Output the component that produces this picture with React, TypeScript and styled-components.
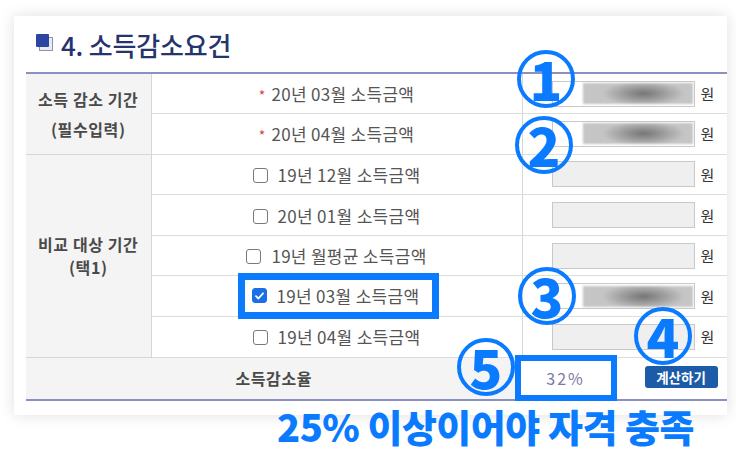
import React from "react";
import styled, { createGlobalStyle } from "styled-components";

const BLUE = "#0a7bff";

const GlobalStyle = createGlobalStyle`
  html, body {
    margin: 0;
    padding: 0;
    background: #fff;
  }
  body {
    font-family: "Noto Sans CJK KR", "Noto Sans", sans-serif;
    color: #555;
  }
`;

const Page = styled.div`
  width: 736px;
  height: 457px;
  padding: 16px 9px 0 14px;
  box-sizing: border-box;
  overflow: hidden;
`;

const Card = styled.div`
  width: 713px;
  height: 399px;
  background: #fff;
  box-shadow: 0 0 14px rgba(0, 0, 0, 0.13);
  padding-left: 12px;
  box-sizing: border-box;
`;

const TitleBar = styled.div`
  height: 56px;
  display: flex;
  align-items: center;
  gap: 8px;
  padding-left: 10px;
`;

const TitleIcon = styled.span`
  position: relative;
  width: 17px;
  height: 17px;
  margin-top: -3px;

  &::after {
    content: "";
    position: absolute;
    left: 3px;
    top: 3px;
    width: 12px;
    height: 12px;
    border: 1px solid #8d93a8;
    background: #e9ebf2;
  }
  &::before {
    content: "";
    position: absolute;
    left: 0;
    top: 0;
    width: 13px;
    height: 13px;
    border-radius: 1px;
    background: #2c45a3;
    z-index: 1;
  }
`;

const Title = styled.h2`
  margin: 0;
  font-size: 26px;
  font-weight: 500;
  color: #26346e;
  letter-spacing: -0.2px;
`;

const TableWrap = styled.div`
  position: relative;
`;

const Table = styled.table`
  width: 701px;
  border-collapse: collapse;
  table-layout: fixed;
  border-top: 2px solid #8a90c2;
  border-bottom: 2px solid #8a90c2;
`;

const Row = styled.tr<{ $h?: number }>`
  height: ${(p) => p.$h ?? 40.6}px;
`;

const HeadCell = styled.th<{ $lh?: number }>`
  background: #f4f4f4;
  border-bottom: 1px solid #d6d6d6;
  border-right: 1px solid #d6d6d6;
  font-size: 16px;
  font-weight: 700;
  color: #4a4a4a;
  letter-spacing: 0.6px;
  line-height: ${(p) => p.$lh ?? 24}px;
  text-align: center;
  padding: 0;
`;

const LabelCell = styled.td`
  border-bottom: 1px solid #dcdcdc;
  border-right: 1px solid #d6d6d6;
  text-align: center;
  padding: 0;
  font-size: 17px;
  letter-spacing: 0.3px;
  color: #555;
  white-space: nowrap;
`;

const ValueCell = styled.td`
  border-bottom: 1px solid #dcdcdc;
  padding: 0 0 0 29px;
`;

const Asterisk = styled.span`
  color: #e23b3b;
  font-size: 14px;
  margin-right: 6px;
`;

const Check = styled.span<{ $on?: boolean }>`
  display: inline-flex;
  align-items: center;
  justify-content: center;
  width: 13px;
  height: 13px;
  border-radius: 3px;
  border: 1px solid ${(p) => (p.$on ? "#1a6fe8" : "#7a7a7a")};
  background: ${(p) => (p.$on ? "#1a6fe8" : "#fff")};
  margin-right: 10px;
  vertical-align: -1px;
`;

const Highlight = styled.span`
  display: inline-flex;
  align-items: center;
  border: 7px solid ${BLUE};
  padding: 0 13px 0 7px;
  height: 32px;
  margin: -8px 0 -6px 4px;
`;

const Field = styled.div`
  display: flex;
  align-items: center;
  gap: 6px;
  font-size: 15px;
  color: #333;
`;

const Input = styled.div<{ $off?: boolean }>`
  width: 143px;
  height: 26px;
  box-sizing: border-box;
  border: 1px solid #c9c9c9;
  background: ${(p) => (p.$off ? "#efefef" : "#fff")};
  display: flex;
  align-items: center;
  justify-content: flex-end;
  padding-right: 1px;
`;

const Blur = styled.div`
  width: 110px;
  height: 21px;
  background: radial-gradient(
    ellipse 50% 80% at 55% 50%,
    #747474 0%,
    #9a9a9a 35%,
    #c5c5c5 75%
  );
  background-color: #c5c5c5;
  filter: blur(1px);
`;

const RateRow = styled.div`
  display: flex;
  align-items: center;
  margin-left: -37px;
`;

const RateBox = styled.div`
  width: 102px;
  height: 46px;
  box-sizing: border-box;
  border: 6px solid ${BLUE};
  background: #fff;
  display: flex;
  align-items: center;
  justify-content: center;
  margin: -3px 0;
  font-size: 16px;
  letter-spacing: 2px;
  color: #7d79a8;
  position: relative;
`;

const CalcButton = styled.button`
  margin-left: 28px;
  width: 73px;
  height: 22px;
  border: none;
  border-radius: 3px;
  background: #1c5ba7;
  color: #fff;
  font-family: inherit;
  font-size: 13.5px;
  font-weight: 700;
  padding: 0;
  line-height: 22px;
  margin-top: -2px;
`;

const Circle = styled.div<{ $x: number; $y: number }>`
  position: absolute;
  left: ${(p) => p.$x}px;
  top: ${(p) => p.$y}px;
  width: 58px;
  height: 58px;
  box-sizing: border-box;
  border: 4px solid ${BLUE};
  border-radius: 50%;
  display: flex;
  align-items: center;
  justify-content: center;
  color: ${BLUE};
  font-family: "Noto Sans CJK KR", "Noto Sans", sans-serif;
  font-weight: 900;
  font-size: 54px;
  line-height: 1;
  padding-bottom: 2px;
  pointer-events: none;
`;

const Caption = styled.div`
  position: relative;
  margin-top: -11px;
  padding-right: 33px;
  text-align: right;
  font-size: 38px;
  font-weight: 900;
  color: ${BLUE};
  letter-spacing: -0.5px;
  line-height: 44px;
`;

type Item = { label: string; checked?: boolean; boxed?: boolean };

const compare: Item[] = [
  { label: "19년 12월 소득금액" },
  { label: "20년 01월 소득금액" },
  { label: "19년 월평균 소득금액" },
  { label: "19년 03월 소득금액", checked: true, boxed: true },
  { label: "19년 04월 소득금액" },
];

const CheckMark = () => (
  <svg width="9" height="8" viewBox="0 0 9 8">
    <path d="M1 4.2 L3.4 6.5 L8 1.3" fill="none" stroke="#fff" strokeWidth="1.8" strokeLinecap="round" strokeLinejoin="round" />
  </svg>
);

const App = () => {
  return (
    <Page>
      <GlobalStyle />
      <Card>
        <TitleBar>
          <TitleIcon />
          <Title>4. 소득감소요건</Title>
        </TitleBar>
        <TableWrap>
          <Table>
            <colgroup>
              <col style={{ width: 125 }} />
              <col style={{ width: 371 }} />
              <col />
            </colgroup>
            <tbody>
              <Row>
                <HeadCell rowSpan={2} $lh={30}>
                  소득 감소 기간
                  <br />
                  (필수입력)
                </HeadCell>
                <LabelCell>
                  <Asterisk>*</Asterisk>20년 03월 소득금액
                </LabelCell>
                <ValueCell>
                  <Field>
                    <Input>
                      <Blur />
                    </Input>
                    원
                  </Field>
                </ValueCell>
              </Row>
              <Row>
                <LabelCell>
                  <Asterisk>*</Asterisk>20년 04월 소득금액
                </LabelCell>
                <ValueCell>
                  <Field>
                    <Input>
                      <Blur />
                    </Input>
                    원
                  </Field>
                </ValueCell>
              </Row>
              {compare.map((item, i) => (
                <Row key={item.label}>
                  {i === 0 && (
                    <HeadCell rowSpan={5} $lh={23}>
                      비교 대상 기간
                      <br />
                      (택1)
                    </HeadCell>
                  )}
                  <LabelCell>
                    {item.boxed ? (
                      <Highlight>
                        <Check $on>
                          <CheckMark />
                        </Check>
                        {item.label}
                      </Highlight>
                    ) : (
                      <>
                        <Check />
                        {item.label}
                      </>
                    )}
                  </LabelCell>
                  <ValueCell>
                    <Field>
                      <Input $off={!item.checked}>{item.checked && <Blur />}</Input>
                      원
                    </Field>
                  </ValueCell>
                </Row>
              ))}
              <Row $h={43}>
                <HeadCell colSpan={2}>소득감소율</HeadCell>
                <ValueCell>
                  <RateRow>
                    <RateBox>32%</RateBox>
                    <CalcButton>계산하기</CalcButton>
                  </RateRow>
                </ValueCell>
              </Row>
            </tbody>
          </Table>
          <Circle $x={491} $y={-22}>1</Circle>
          <Circle $x={489} $y={44}>2</Circle>
          <Circle $x={492} $y={195}>3</Circle>
          <Circle $x={608} $y={235}>4</Circle>
          <Circle $x={431} $y={266}>5</Circle>
        </TableWrap>
      </Card>
      <Caption>25% 이상이어야 자격 충족</Caption>
    </Page>
  );
};

export default App;
